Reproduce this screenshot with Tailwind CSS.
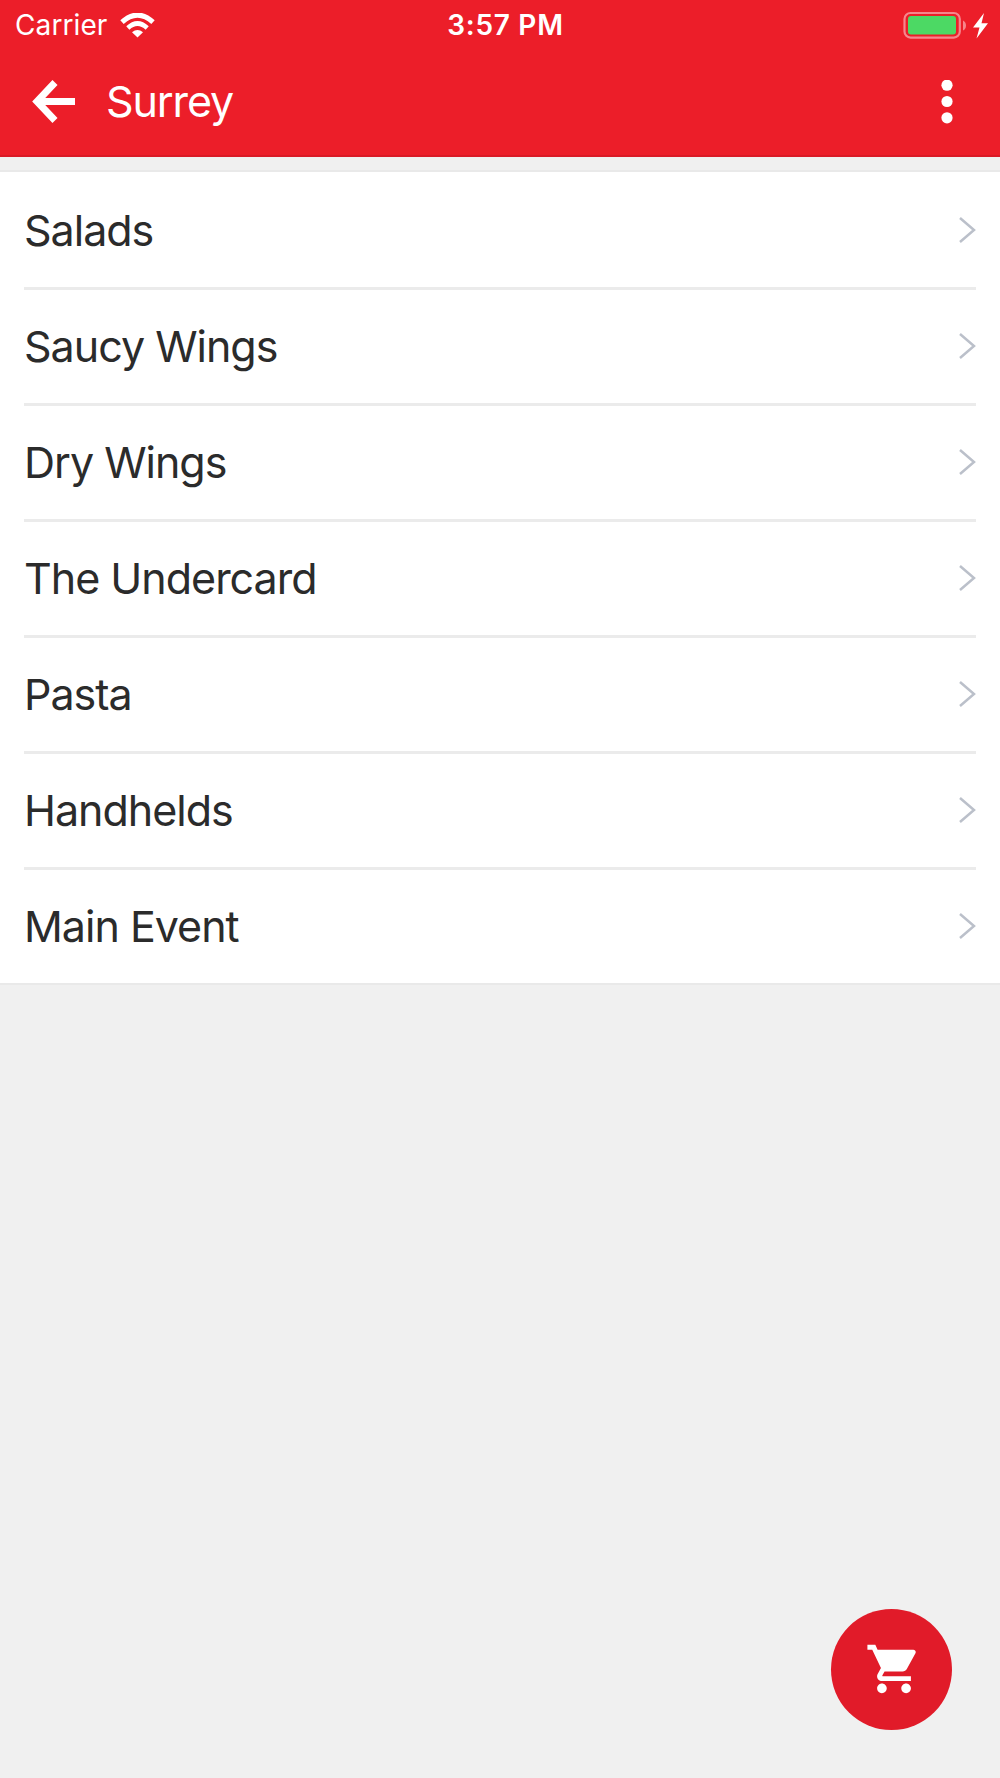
<!DOCTYPE html>
<html lang="en">
<head>
<meta charset="utf-8">
<title>Surrey</title>
<script src="https://cdn.jsdelivr.net/npm/@tailwindcss/browser@4"></script>
</head>
<body class="bg-[#f0f0f0] font-['Inter',sans-serif] text-[#2b2b2b]">
<div class="relative flex h-[1778px] w-[1000px] flex-col overflow-hidden">
  <header class="flex h-[157px] shrink-0 flex-col border-b-2 border-[#d91a26] bg-[#ec1e29] text-white">
    <div class="grid h-[49px] grid-cols-3 items-center">
      <div class="flex items-center gap-[13px] pl-[15px]">
        <span class="text-[28px] leading-[50px] tracking-[0.1px]">Carrier</span>
        <svg class="h-[25px] w-[35px]" viewBox="0 0 35 25" fill="none" stroke="#fff"><path d="M2 9.200Q17.500-5 33 9.200" stroke-width="5"/><path d="M7.800 15Q17.500 6 27.200 15" stroke-width="4.600"/><path d="M12 19.300Q17.500 14.500 23 19.300L17.500 24.500Z" fill="#fff" stroke="none"/></svg>
      </div>
      <span class="pl-[11px] text-center text-[28px] font-semibold leading-[50px] tracking-[0.7px]">3:57 PM</span>
      <div class="flex justify-end pr-[12px]">
        <svg class="h-[28px] w-[86px]" viewBox="902 10 86 28"><rect x="904.500" y="12" width="55.300" height="24.600" rx="6" fill="none" stroke="#f6868c" stroke-width="2.200"/><rect x="908" y="15" width="48" height="18.500" rx="3" fill="#4cd964"/><path d="M963 19.500Q966 21 966 24.500Q966 28 963 29.500Z" fill="#f6868c"/><path d="M984 12L973 26.500H979.500L976.500 37.500L988 22.300H981.500Z" fill="#fff"/></svg>
      </div>
    </div>
    <div class="flex h-[105px] items-center pl-[32px] pr-[47px]">
      <svg class="h-[43px] w-[43px]" viewBox="0 0 43 43" fill="none" stroke="#fff" stroke-width="7"><path d="M23 2.500L5 21.500L23 40.500M5 21.500H43"/></svg>
      <h1 class="ml-[31px] pb-[2px] text-[43px] font-normal leading-[60px] tracking-[-1.1px]">Surrey</h1>
      <svg class="ml-auto h-[44px] w-[12px]" viewBox="0 0 12 44" fill="#fff"><circle cx="6" cy="5.200" r="5.600"/><circle cx="6" cy="21.500" r="5.600"/><circle cx="6" cy="37.800" r="5.600"/></svg>
    </div>
  </header>
  <main class="mt-[13px] border-y-2 border-[#e9e9e9] bg-white px-[24px] pt-[2px] text-[43px] font-normal tracking-[-1px]">
    <a class="flex h-[116px] items-center justify-between border-b-3 border-[#ebebeb] pb-[2px]"><span class="pt-[2px]">Salads</span><svg class="h-[28px] w-[18px]" viewBox="0 0 18 28" fill="none" stroke="#bbc0ca" stroke-width="2.500"><path d="M2 2L16 14L2 26"/></svg></a>
    <a class="flex h-[116px] items-center justify-between border-b-3 border-[#ebebeb] pb-[2px]"><span class="pt-[2px]">Saucy Wings</span><svg class="h-[28px] w-[18px]" viewBox="0 0 18 28" fill="none" stroke="#bbc0ca" stroke-width="2.500"><path d="M2 2L16 14L2 26"/></svg></a>
    <a class="flex h-[116px] items-center justify-between border-b-3 border-[#ebebeb] pb-[2px]"><span class="pt-[2px]">Dry Wings</span><svg class="h-[28px] w-[18px]" viewBox="0 0 18 28" fill="none" stroke="#bbc0ca" stroke-width="2.500"><path d="M2 2L16 14L2 26"/></svg></a>
    <a class="flex h-[116px] items-center justify-between border-b-3 border-[#ebebeb] pb-[2px]"><span class="pt-[2px]">The Undercard</span><svg class="h-[28px] w-[18px]" viewBox="0 0 18 28" fill="none" stroke="#bbc0ca" stroke-width="2.500"><path d="M2 2L16 14L2 26"/></svg></a>
    <a class="flex h-[116px] items-center justify-between border-b-3 border-[#ebebeb] pb-[2px]"><span class="pt-[2px]">Pasta</span><svg class="h-[28px] w-[18px]" viewBox="0 0 18 28" fill="none" stroke="#bbc0ca" stroke-width="2.500"><path d="M2 2L16 14L2 26"/></svg></a>
    <a class="flex h-[116px] items-center justify-between border-b-3 border-[#ebebeb] pb-[2px]"><span class="pt-[2px]">Handhelds</span><svg class="h-[28px] w-[18px]" viewBox="0 0 18 28" fill="none" stroke="#bbc0ca" stroke-width="2.500"><path d="M2 2L16 14L2 26"/></svg></a>
    <a class="flex h-[113px] items-center justify-between pb-[2px]"><span class="pt-[2px]">Main Event</span><svg class="h-[28px] w-[18px]" viewBox="0 0 18 28" fill="none" stroke="#bbc0ca" stroke-width="2.500"><path d="M2 2L16 14L2 26"/></svg></a>
  </main>
  <button class="absolute left-[831px] top-[1609px] flex size-[121px] items-center justify-center rounded-full bg-[#e11b29] pb-px pl-[4px]" aria-label="Cart">
    <svg class="size-[58px]" viewBox="0 0 24 24" fill="#fff"><path d="M7 18c-1.100 0-1.990.9-1.990 2S5.900 22 7 22s2-.9 2-2-.9-2-2-2zM1 2v2h2l3.600 7.590-1.350 2.450c-.16.280-.25.610-.25.960 0 1.100.9 2 2 2h12v-2H7.420c-.14 0-.25-.11-.25-.25l.03-.12.900-1.630h7.450c.75 0 1.410-.41 1.750-1.030l3.580-6.490c.08-.14.120-.31.120-.48 0-.55-.45-1-1-1H5.210l-.94-2H1zm16 16c-1.100 0-1.990.9-1.990 2s.89 2 1.990 2 2-.9 2-2-.9-2-2-2z"/></svg>
  </button>
</div>
</body>
</html>
